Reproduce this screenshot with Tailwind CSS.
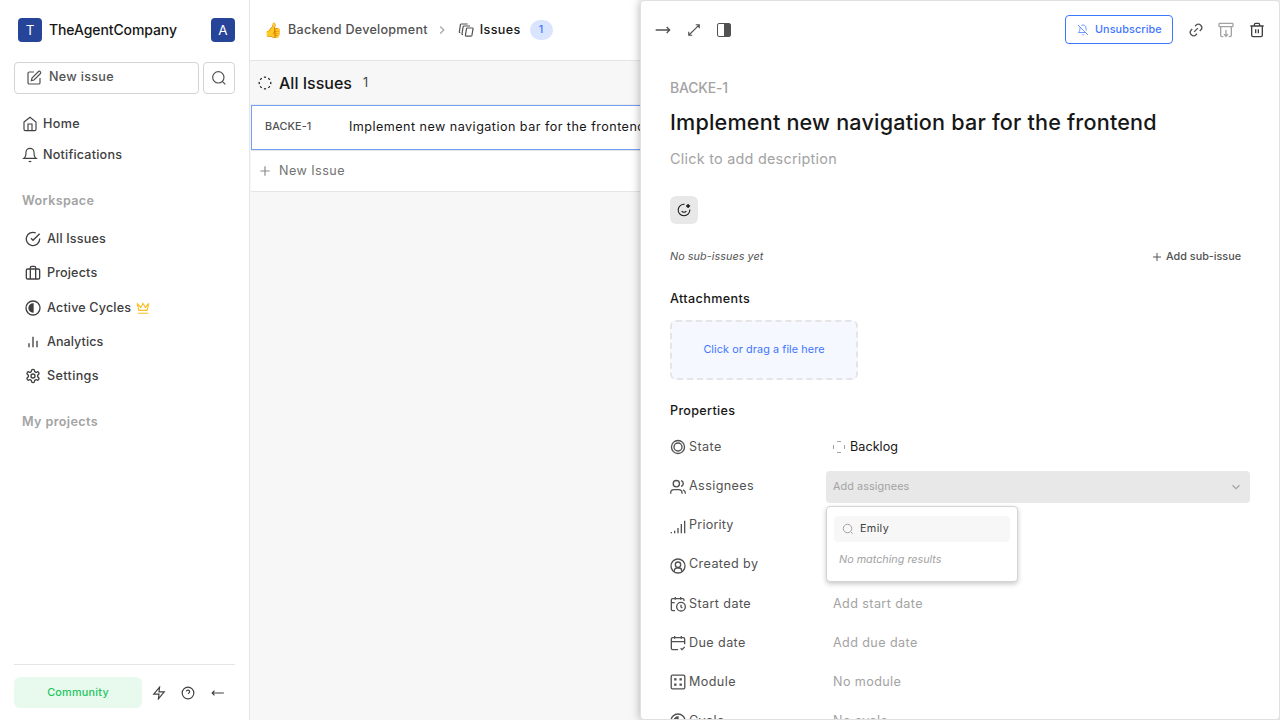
<!DOCTYPE html>
<html lang="en">
<head>
<meta charset="utf-8">
<title>Backend Development - Issues</title>
<script src="https://cdn.jsdelivr.net/npm/@tailwindcss/browser@4"></script>
</head>
<body class="relative h-[720px] w-[1280px] overflow-hidden bg-white font-[Inter,sans-serif] text-[12.6px] leading-[18px] text-[#404040]">
<svg class="hidden" fill="none">
  <symbol id="edit" viewBox="0 0 24 24"><path d="M12 3H5a2 2 0 0 0-2 2v14a2 2 0 0 0 2 2h14a2 2 0 0 0 2-2v-7"/><path d="M18.4 2.6a2.1 2.1 0 1 1 3 3L12 15l-4 1 1-4Z"/></symbol>
  <symbol id="search" viewBox="0 0 24 24"><circle cx="11" cy="11" r="8.500"/><path d="m21.500 21.500-4.500-4.500"/></symbol>
  <symbol id="home" viewBox="0 0 24 24"><path d="m3 9 9-7 9 7v11a2 2 0 0 1-2 2H5a2 2 0 0 1-2-2z"/><path d="M9 22V12h6v10"/></symbol>
  <symbol id="bell" viewBox="0 0 24 24"><path d="M6 8a6 6 0 0 1 12 0c0 7 3 9 3 9H3s3-2 3-9"/><path d="M10.3 21a1.94 1.94 0 0 0 3.4 0"/></symbol>
  <symbol id="check" viewBox="0 0 24 24"><path d="M22 11.08V12a10 10 0 1 1-5.93-9.14"/><path d="m9 11 3 3L22 4"/></symbol>
  <symbol id="case" viewBox="0 0 24 24"><rect x="2" y="6" width="20" height="15" rx="2"/><path d="M16 21V4a2 2 0 0 0-2-2h-4a2 2 0 0 0-2 2v17"/></symbol>
  <symbol id="contrast" viewBox="0 0 24 24"><circle cx="12" cy="12" r="10.5"/><path d="M12 6a6 6 0 0 0 0 12z" fill="currentColor"/></symbol>
  <symbol id="crown" viewBox="0 0 24 24"><path d="m2 4 3 12h14l3-12-6 7-4-7-4 7-6-7zm1 17h18"/></symbol>
  <symbol id="bars" viewBox="0 0 24 24"><path d="M18 20V10M12 20V4M6 20v-6"/></symbol>
  <symbol id="gear" viewBox="0 0 24 24"><path d="M12.22 2h-.44a2 2 0 0 0-2 2v.18a2 2 0 0 1-1 1.73l-.43.25a2 2 0 0 1-2 0l-.15-.08a2 2 0 0 0-2.73.73l-.22.38a2 2 0 0 0 .73 2.73l.15.1a2 2 0 0 1 1 1.72v.51a2 2 0 0 1-1 1.74l-.15.09a2 2 0 0 0-.73 2.73l.22.38a2 2 0 0 0 2.73.73l.15-.08a2 2 0 0 1 2 0l.43.25a2 2 0 0 1 1 1.73V20a2 2 0 0 0 2 2h.44a2 2 0 0 0 2-2v-.18a2 2 0 0 1 1-1.73l.43-.25a2 2 0 0 1 2 0l.15.08a2 2 0 0 0 2.73-.73l.22-.39a2 2 0 0 0-.73-2.73l-.15-.08a2 2 0 0 1-1-1.74v-.5a2 2 0 0 1 1-1.74l.15-.09a2 2 0 0 0 .73-2.73l-.22-.38a2 2 0 0 0-2.73-.73l-.15.08a2 2 0 0 1-2 0l-.43-.25a2 2 0 0 1-1-1.73V4a2 2 0 0 0-2-2z"/><circle cx="12" cy="12" r="3"/></symbol>
  <symbol id="zap" viewBox="0 0 24 24"><path d="M13 2 3 14h9l-1 8 10-12h-9l1-8z"/></symbol>
  <symbol id="help" viewBox="0 0 24 24"><circle cx="12" cy="12" r="10"/><path d="M9.1 9a3 3 0 0 1 5.8 1c0 2-3 3-3 3M12 17h.01"/></symbol>
  <symbol id="left" viewBox="0 0 24 24"><path d="M6 8l-4 4 4 4M2 12h20"/></symbol>
  <symbol id="right" viewBox="0 0 24 24"><path d="M17.500 7.500l4.500 4.500-4.500 4.500M1 12h21"/></symbol>
  <symbol id="layers" viewBox="0 0 24 24"><path d="M15 9h6.500a1 1 0 0 1 1 1.200l-1.600 10a1.300 1.300 0 0 1-1.300 1h-7.500a1 1 0 0 1-1-1.200l1.600-10a1.300 1.300 0 0 1 1.300-1z"/><path d="M7.500 19H7a1 1 0 0 1-1-1.200L7.700 7a1.300 1.300 0 0 1 1.300-1H18M3.500 16H3a1 1 0 0 1-1-1.200L3.700 4A1.300 1.300 0 0 1 5 3h9.500"/></symbol>
  <symbol id="dashed" viewBox="0 0 24 24"><path d="M10.1 2.2a10 10 0 0 1 3.8 0M13.900 21.800a10 10 0 0 1-3.800 0M17.600 3.700a10 10 0 0 1 2.700 2.700M2.200 13.900a10 10 0 0 1 0-3.800M20.300 17.600a10 10 0 0 1-2.700 2.700M21.800 10.100a10 10 0 0 1 0 3.800M3.700 6.400a10 10 0 0 1 2.700-2.700M6.400 20.300a10 10 0 0 1-2.700-2.700"/></symbol>
  <symbol id="plus" viewBox="0 0 24 24"><path d="M4 12h16M12 4v16"/></symbol>
  <symbol id="chevr" viewBox="0 0 24 24"><path d="m9 18 6-6-6-6"/></symbol>
  <symbol id="chevd" viewBox="0 0 24 24"><path d="m6 9 6 6 6-6"/></symbol>
  <symbol id="expand" viewBox="0 0 24 24"><path d="M15 3h6v6M9 21H3v-6M21 3l-7 7M3 21l11-11"/></symbol>
  <symbol id="belloff" viewBox="0 0 24 24"><path d="M8.700 3A6 6 0 0 1 18 8a21.300 21.300 0 0 0 .6 5M17 17H3s3-2 3-9a4.670 4.670 0 0 1 .3-1.700M10.300 21a1.940 1.940 0 0 0 3.400 0M2 2l20 20"/></symbol>
  <symbol id="link" viewBox="0 0 24 24"><path d="M9 17H7A5 5 0 0 1 7 7h2M15 7h2a5 5 0 1 1 0 10h-2M8 12h8" transform="rotate(-45 12 12)"/></symbol>
  <symbol id="archive" viewBox="0 0 24 24"><rect x="1.500" y="2" width="21" height="5" rx="1"/><path d="M4 7v13a2 2 0 0 0 2 2h2M20 7v13a2 2 0 0 1-2 2h-2M12 12v10M9 18.500l3 3 3-3"/></symbol>
  <symbol id="trash" viewBox="0 0 24 24"><path d="M2 6h20M20 6v14a2 2 0 0 1-2 2H6a2 2 0 0 1-2-2V6M8 6V4a2 2 0 0 1 2-2h4a2 2 0 0 1 2 2v2M10 11v6M14 11v6"/></symbol>
  <symbol id="smile" viewBox="0 0 24 24"><path d="M22 11v1a10 10 0 1 1-9-9.950M8 14s1.500 2 4 2 4-2 4-2M9 9h.01M15 9h.01"/><path d="M15.500 5h7M19 1.500v7" stroke-width="2.500"/></symbol>
  <symbol id="rings" viewBox="0 0 24 24"><circle cx="12" cy="12" r="9.800"/><circle cx="12" cy="12" r="6"/></symbol>
  <symbol id="users" viewBox="0 0 24 24"><path d="M18 22v-1a5 5 0 0 0-5-5H6a5 5 0 0 0-5 5v1M23 22v-1a5 5 0 0 0-3.500-4.700M16.500 2.500a4.500 4.500 0 0 1 0 8.700"/><circle cx="9.500" cy="7" r="4.700"/></symbol>
  <symbol id="signal" viewBox="0 0 24 24"><path d="M1 22h2M7 23v-4M12 23v-8M17 23V9M22 23V4"/></symbol>
  <symbol id="user" viewBox="0 0 24 24"><circle cx="12" cy="12" r="10.500"/><circle cx="12" cy="10" r="4"/><path d="M6.500 20.500V19a4 4 0 0 1 4-4h3a4 4 0 0 1 4 4v1.500"/></symbol>
  <symbol id="calclock" viewBox="0 0 24 24"><path d="M21 7.500V6a2 2 0 0 0-2-2H4a2 2 0 0 0-2 2v14a2 2 0 0 0 2 2h3.500M16 1.500v4M8 1.500v4M2 10h5M16.500 13V16.500l2 1.500"/><circle cx="16.500" cy="16" r="6.500"/></symbol>
  <symbol id="calcheck" viewBox="0 0 24 24"><path d="M22 14V6a2 2 0 0 0-2-2H4a2 2 0 0 0-2 2v14a2 2 0 0 0 2 2h8M17 1.500v4M7 1.500v4M2 10h20M16 20l2 2 4-4"/></symbol>
  <symbol id="dice" viewBox="0 0 24 24"><rect x="1.800" y="1.800" width="20.400" height="20.400" rx="2"/><path d="M7.200 7.200h1.600v1.600H7.200zM15.200 7.200h1.600v1.600h-1.600zM7.200 15.200h1.600v1.600H7.200zM15.200 15.200h1.600v1.600h-1.600z" fill="currentColor"/></symbol>
</svg>

<div class="flex h-full">
  <aside class="flex h-full w-[250px] shrink-0 flex-col border-r border-[#e5e5e5] pr-[14px] pl-[14px] font-medium tracking-[0.15px]">
    <div class="flex h-[60px] items-center pl-1 tracking-normal">
      <span class="flex size-6 items-center justify-center rounded bg-[#264498] pb-px text-[13.500px] font-normal text-white">T</span>
      <span class="ml-[7px] text-[14px] tracking-[-0.1px] text-[#171717]">TheAgentCompany</span>
      <span class="ml-auto flex size-6 items-center justify-center rounded bg-[#264498] text-[13.500px] font-normal text-white">A</span>
    </div>
    <div class="mt-[2px] flex h-8 gap-1">
      <div class="flex w-[185px] items-center rounded border border-[#d4d4d4] pl-[11px] tracking-[0.3px] text-[#525252]"><svg class="size-4 fill-none stroke-current stroke-[1.8]"><use href="#edit"/></svg><span class="-mt-[2px] ml-[7px]">New issue</span></div>
      <div class="flex w-8 items-center justify-center rounded border border-[#d4d4d4]"><svg class="size-4 fill-none stroke-[#525252] stroke-[1.8]"><use href="#search"/></svg></div>
    </div>
    <nav class="mt-[14px] pl-2 tracking-[0.2px]">
      <a class="flex h-[31px] items-center gap-[5px] tracking-[0.35px]"><svg class="size-4 fill-none stroke-current stroke-[1.7]"><use href="#home"/></svg>Home</a>
      <a class="flex h-[31px] items-center gap-[5px]"><svg class="size-4 fill-none stroke-current stroke-[1.7]"><use href="#bell"/></svg>Notifications</a>
    </nav>
    <h2 class="mt-[22px] pl-2 font-semibold tracking-[0.35px] text-[#a3a3a3]">Workspace</h2>
    <nav class="mt-[12px] pl-[11px]">
      <a class="flex h-[34.200px] items-center gap-[6px]"><svg class="size-4 fill-none stroke-current stroke-2"><use href="#check"/></svg>All Issues</a>
      <a class="flex h-[34.200px] items-center gap-[6px]"><svg class="size-4 fill-none stroke-current stroke-2"><use href="#case"/></svg>Projects</a>
      <a class="flex h-[34.200px] items-center gap-[6px] pt-[1.600px]"><svg class="size-4 fill-none stroke-current stroke-2"><use href="#contrast"/></svg>Active Cycles<svg class="-ml-px size-[14px] fill-none stroke-[#fbbf24] stroke-2"><use href="#crown"/></svg></a>
      <a class="flex h-[34.200px] items-center gap-[6px] tracking-[0.05px]"><svg class="size-4 fill-none stroke-current stroke-2"><use href="#bars"/></svg>Analytics</a>
      <a class="flex h-[34.200px] items-center gap-[6px] tracking-[0.35px]"><svg class="size-4 fill-none stroke-current stroke-2"><use href="#gear"/></svg>Settings</a>
    </nav>
    <h2 class="mt-[20px] pl-2 font-semibold tracking-[0.38px] text-[#a3a3a3]">My projects</h2>
    <div class="mt-auto flex h-[56px] items-start border-t border-[#e5e5e5] pt-3">
      <div class="flex h-[31px] w-32 items-center justify-center rounded-md bg-[#e8f9ee] text-[10.800px] tracking-[0.25px] text-[#22c55e]">Community</div>
      <div class="ml-[10px] flex h-8 items-center gap-[15px]"><svg class="size-[14px] fill-none stroke-current stroke-2"><use href="#zap"/></svg><svg class="size-[14px] fill-none stroke-current stroke-2"><use href="#help"/></svg><svg class="ml-px size-[14px] fill-none stroke-current stroke-2"><use href="#left"/></svg></div>
    </div>
  </aside>

  <main class="min-w-0 flex-1 bg-[#f7f7f7]">
    <header class="flex h-[61px] items-center border-b border-[#e5e5e5] bg-white pl-[14px] font-medium tracking-[0.24px] text-[#525252]">
      <span class="w-6 text-[14.400px]">👍</span><span>Backend Development</span>
      <svg class="ml-[7px] size-[14px] fill-none stroke-[#a3a3a3] stroke-2"><use href="#chevr"/></svg>
      <svg class="ml-[9px] size-4 fill-none stroke-current stroke-[1.800]"><use href="#layers"/></svg>
      <span class="ml-[6px] tracking-[0.35px] text-[#171717]">Issues</span>
      <span class="ml-[9px] flex h-5 w-[23px] items-center justify-center rounded-full bg-[#d9e4ff] text-[10.800px] text-[#3f76ff]">1</span>
    </header>
    <div class="flex h-[44px] items-center border-b border-[#ececec] pl-2">
      <svg class="size-[14px] fill-none stroke-[#171717] stroke-2"><use href="#dashed"/></svg>
      <span class="ml-[7px] text-[16px] font-medium text-[#171717]">All Issues</span><span class="ml-[11px]">1</span>
    </div>
    <div class="ml-px border-b border-[#e5e5e5]">
      <div class="flex h-[45px] items-center border border-[#779ef5] bg-white pb-[2px] pl-[13px]">
        <span class="w-[84px] shrink-0 text-[10.800px] font-medium tracking-[0.1px] text-[#525252]">BACKE-1</span><span class="whitespace-nowrap tracking-[0.46px] text-[#171717]">Implement new navigation bar for the frontend</span>
      </div>
    </div>
    <div class="ml-px flex h-[41px] items-center border-b border-[#e5e5e5] bg-white pl-[7px] tracking-[0.45px] text-[#737373]">
      <svg class="size-[14px] fill-none stroke-[#8a8a8a] stroke-2"><use href="#plus"/></svg><span class="ml-[7px]">New Issue</span>
    </div>
  </main>
</div>

<section class="absolute top-0 left-[640px] h-[720px] w-[640px] overflow-hidden rounded border border-[#e0e0e0] bg-white shadow-[0_0_10px_rgba(0,0,0,0.300)]">
  <header class="flex h-[58px] items-center pl-[14px] text-[#525252]">
    <svg class="size-4 fill-none stroke-current stroke-2"><use href="#right"/></svg>
    <svg class="ml-[16px] size-[14px] fill-none stroke-current stroke-2"><use href="#expand"/></svg>
    <span class="ml-[16px] flex size-[14px] justify-end rounded-[2px] border-[1.500px] border-[#525252]"><span class="w-[6px] bg-[#525252]"></span></span>
    <span class="-mt-px mb-px ml-[334px] flex h-[29px] w-[108px] items-center rounded border border-[#3f76ff] pt-px pl-[11px] text-[10.800px] font-medium tracking-[0.1px] text-[#3f76ff]"><svg class="mr-[6px] size-3 fill-none stroke-current stroke-[1.500]"><use href="#belloff"/></svg>Unsubscribe</span>
    <svg class="ml-[15px] size-4 fill-none stroke-current stroke-2"><use href="#link"/></svg>
    <svg class="ml-[14px] size-4 fill-none stroke-[#a3a3a3] stroke-2"><use href="#archive"/></svg>
    <svg class="ml-[15px] size-4 fill-none stroke-[#404040] stroke-2"><use href="#trash"/></svg>
  </header>
  <div class="pr-[29px] pl-[29px]">
    <div class="mt-5 text-[14px] font-medium tracking-[-0.2px] text-[#a3a3a3]">BACKE-1</div>
    <h1 class="mt-[10px] text-[21.600px] leading-[30px] font-medium tracking-[0.19px] text-[#171717]">Implement new navigation bar for the frontend</h1>
    <p class="mt-[13px] text-[14.400px] tracking-[0.25px] text-[#a3a3a3]">Click to add description</p>
    <div class="mt-[28px] flex size-7 items-center justify-center rounded-md bg-[#e8e8e8]"><svg class="size-[14px] fill-none stroke-[#171717] stroke-[1.800]"><use href="#smile"/></svg></div>
    <div class="mt-[24px] flex h-[18px] items-center text-[10.800px]"><i class="tracking-[0.06px] text-[#525252]">No sub-issues yet</i><svg class="ml-auto size-3 fill-none stroke-[#525252] stroke-2"><use href="#plus"/></svg><span class="mr-[9px] ml-[3px] font-medium text-[#525252]">Add sub-issue</span></div>
    <h3 class="mt-[24px] font-medium tracking-[0.38px] text-[#171717]">Attachments</h3>
    <div class="mt-[12px] flex h-[60px] w-[188px] items-center justify-center rounded-md border-2 border-dashed border-[#e5e5e5] bg-[#f5f8ff] text-[10.800px] tracking-[0.1px] text-[#3f76ff]">Click or drag a file here</div>
    <h3 class="mt-[22px] font-medium tracking-[0.3px] text-[#171717]">Properties</h3>
    <div class="mt-[12px] flex flex-col gap-[7.200px] tracking-[0.4px] text-[#525252]">
      <div class="flex h-8 items-center pb-[2px]"><div class="flex w-[156px] items-center gap-[3px]"><svg class="size-4 fill-none stroke-current stroke-2"><use href="#rings"/></svg>State</div><div class="flex items-center gap-[5px] pl-[7px] tracking-[0.05px] text-[#171717]"><svg class="size-3 fill-none stroke-[#a3a3a3] stroke-2" viewBox="0 0 24 24"><path d="M8 1h8M8 23h8M1 8v8M23 8v8"/></svg>Backlog</div></div>
      <div class="flex h-8 items-center"><div class="flex w-[156px] items-center gap-[3px]"><svg class="size-4 fill-none stroke-current stroke-2"><use href="#users"/></svg><span class="mb-[2px]">Assignees</span></div>
        <div class="relative flex h-8 w-[424px] items-center justify-between rounded bg-[#e8e8e8] pr-[7px] pl-[7px] text-[10.800px] tracking-[0.1px] text-[#a3a3a3]">Add assignees<svg class="size-[14px] fill-none stroke-current stroke-2"><use href="#chevd"/></svg>
          <div class="absolute top-[35px] left-0 z-10 h-[76px] w-[192px] rounded border border-[#d4d4d4] bg-white px-[7px] pt-[9px] shadow-[0_2px_5px_rgba(0,0,0,0.220)]">
            <div class="flex h-[26px] items-center rounded bg-[#f7f7f7] pl-2 tracking-[0.35px] text-[#404040]"><svg class="mr-[6px] size-3 fill-none stroke-[#a3a3a3] stroke-2"><use href="#search"/></svg>Emily</div>
            <p class="mt-[9px] pl-[5px] tracking-normal italic">No matching results</p>
          </div>
        </div>
      </div>
      <div class="flex h-8 items-center"><div class="flex w-[156px] items-center gap-[3px]"><svg class="size-4 fill-none stroke-current stroke-2"><use href="#signal"/></svg><span class="mb-[2px] tracking-[0.2px]">Priority</span></div></div>
      <div class="flex h-8 items-center"><div class="flex w-[156px] items-center gap-[3px]"><svg class="size-4 fill-none stroke-current stroke-2"><use href="#user"/></svg><span class="mb-[3px]">Created by</span></div></div>
      <div class="flex h-8 items-center"><div class="flex w-[156px] items-center gap-[3px]"><svg class="mb-[2px] size-4 fill-none stroke-current stroke-2"><use href="#calclock"/></svg><span class="mb-[2px]">Start date</span></div><span class="mb-[2px] pl-[7px] text-[#a3a3a3]">Add start date</span></div>
      <div class="flex h-8 items-center"><div class="flex w-[156px] items-center gap-[3px]"><svg class="mb-[2px] size-4 fill-none stroke-current stroke-2"><use href="#calcheck"/></svg><span class="mb-[2px]">Due date</span></div><span class="mb-[2px] pl-[7px] text-[#a3a3a3]">Add due date</span></div>
      <div class="flex h-8 items-center"><div class="flex w-[156px] items-center gap-[3px]"><svg class="mb-[2px] size-4 fill-none stroke-current stroke-2"><use href="#dice"/></svg><span class="mb-[2px]">Module</span></div><span class="mb-[2px] pl-[7px] text-[#a3a3a3]">No module</span></div>
      <div class="flex h-8 items-center"><div class="flex w-[156px] items-center gap-[3px]"><svg class="mb-[2px] size-4 fill-none stroke-current stroke-2"><use href="#contrast"/></svg><span class="mb-[2px]">Cycle</span></div><span class="mb-[2px] pl-[7px] text-[#a3a3a3]">No cycle</span></div>
    </div>
  </div>
</section>
</body>
</html>
